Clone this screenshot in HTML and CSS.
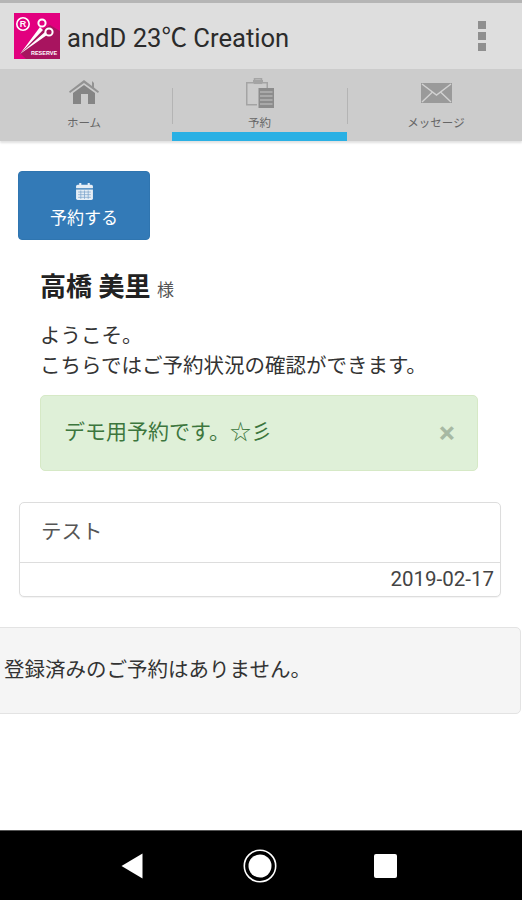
FILE: index.html
```html
<!DOCTYPE html>
<html lang="ja">
<head>
  <meta charset="UTF-8" />
  <meta name="viewport" content="width=device-width, initial-scale=1.0" />
  <title>andD 23℃ Creation</title>
  <link rel="stylesheet" href="styles.css">
</head>
<body>
  <div class="app-bar">
    <svg class="logo" viewBox="0 0 46 46">
      <rect width="46" height="46" fill="#e2007f"/>
      <path d="M46 18 L46 46 L12 46 L6 40 L28 17 L36 12 Z" fill="#a8145f"/>
      <circle cx="9" cy="11" r="6.2" fill="none" stroke="#fff" stroke-width="1.6"/>
      <text class="logo-r" x="9" y="14" text-anchor="middle">R</text>
      <circle cx="28" cy="10" r="3.6" fill="none" stroke="#fff" stroke-width="2"/>
      <circle cx="35" cy="19" r="3.6" fill="none" stroke="#fff" stroke-width="2"/>
      <path d="M6 41 L26 14 L29 17 Z M6 41 L31 19 L33 22 Z" fill="#fff"/>
      <text class="logo-text" x="30" y="42" text-anchor="middle">RESERVE</text>
    </svg>
    <div class="app-title">andD 23℃ Creation</div>
    <div class="menu-dots"><span></span><span></span><span></span></div>
  </div>

  <div class="tabs">
    <div class="tab tab-home">
      <svg class="tab-icon icon-home" viewBox="0 0 30 25">
        <path d="M0 12.5 L15 1 L23 7 L23 2 L25 4 L25 8.5 L30 12.5 L29 14 L15 4 L1 14 Z" fill="#939393"/>
        <path d="M4 14 L15 6 L26 14 L26 25 L19 25 L19 15 L12 15 L12 25 L4 25 Z" fill="#858585"/>
      </svg>
      <div class="tab-label">ホーム</div>
    </div>
    <div class="tab tab-active">
      <svg class="tab-icon icon-clip" viewBox="0 0 28 30">
        <path d="M0 4 H7 V2 H17 V4 H22 V10 H20.5 V5.5 H1.5 V26 H11 V27.5 H0 Z" fill="#a4a4a4"/>
        <rect x="8.5" y="0.8" width="7" height="4.5" fill="none" stroke="#a4a4a4" stroke-width="1.5"/>
        <path d="M12.5 10 H28 V30 H12.5 Z" fill="#8c8c8c"/>
        <path d="M14 14 H26.5 M14 18 H26.5 M14 22 H26.5 M14 26 H26.5" stroke="#c6c6c6" stroke-width="1.2"/>
      </svg>
      <div class="tab-label">予約</div>
    </div>
    <div class="tab tab-msg">
      <svg class="tab-icon icon-mail" viewBox="0 0 31 20">
        <rect width="31" height="20" fill="#9a9a9a"/>
        <path d="M1 1 L15.5 12 L30 1 M1 19 L11.5 9 M30 19 L19.5 9" fill="none" stroke="#d2d2d2" stroke-width="1.4"/>
      </svg>
      <div class="tab-label">メッセージ</div>
    </div>
  </div>

  <main class="content">
    <button class="btn-reserve">
      <svg class="cal-icon" viewBox="0 0 18 18">
        <path d="M1 4 Q1 2.5 2.5 2.5 H4 V1 H6 V2.5 H12 V1 H14 V2.5 H15.5 Q17 2.5 17 4 V6 H1 Z" fill="#e6eef6"/>
        <path d="M1 7 H17 V15.5 Q17 17 15.5 17 H2.5 Q1 17 1 15.5 Z" fill="#e6eef6"/>
        <path d="M3 9.5 H15 M3 12 H15 M3 14.5 H15 M5.5 8 V16 M9 8 V16 M12.5 8 V16" stroke="#7ba3cb" stroke-width=".7"/>
      </svg>
      <span>予約する</span>
    </button>

    <div class="welcome">
      <div class="user-name">高橋 美里 <small>様</small></div>
      <p class="greeting">ようこそ。<br>こちらではご予約状況の確認ができます。</p>
      <div class="alert">
        <span>デモ用予約です。☆彡</span>
        <span class="alert-close">×</span>
      </div>
    </div>

    <div class="panel">
      <div class="panel-body">テスト</div>
      <div class="panel-footer">2019-02-17</div>
    </div>

    <div class="well">登録済みのご予約はありません。</div>
  </main>

  <div class="nav-bar">
    <svg class="nav-back" viewBox="0 0 22 26"><path d="M0.5 13 L21.5 0.5 V25.5 Z" fill="#fff"/></svg>
    <svg class="nav-home" viewBox="0 0 34 34">
      <circle cx="17" cy="17" r="15.7" fill="none" stroke="#fff" stroke-width="1.6"/>
      <circle cx="17" cy="17" r="11.5" fill="#fff"/>
    </svg>
    <div class="nav-recent"></div>
  </div>
</body>
</html>
```

FILE: styles.css
```css
* {
  box-sizing: border-box;
}

body {
  margin: 0;
  height: 900px;
  display: flex;
  flex-direction: column;
  overflow: hidden;
  background: #fff;
  color: #333;
  font-family: 'Roboto', 'Noto Sans CJK JP', sans-serif;
}

.app-bar {
  height: 69px;
  flex-shrink: 0;
  border-top: 3px solid #b5b5b5;
  background: #dedede;
  display: flex;
  align-items: center;
  padding: 0 36px 0 14px;
}

.logo {
  width: 46px;
  height: 46px;
  flex-shrink: 0;
}

.logo-r {
  font: bold 9px 'Liberation Sans', sans-serif;
  fill: #fff;
}

.logo-text {
  font: bold 5.5px 'Liberation Sans', sans-serif;
  fill: #fff;
}

.app-title {
  flex: 1;
  margin-left: 7px;
  padding-bottom: 2px;
  font-size: 25.6px;
  color: #2b2b2b;
  white-space: nowrap;
}

.menu-dots {
  display: flex;
  flex-direction: column;
  gap: 3px;
}

.menu-dots span {
  width: 8px;
  height: 8px;
  background: #8f8f8f;
}

.tabs {
  height: 72px;
  flex-shrink: 0;
  display: grid;
  grid-template-columns: 172px 175px 1fr;
  background: #ccc;
  box-shadow: 0 2px 2px rgba(0, 0, 0, 0.12);
}

.tab {
  position: relative;
  display: flex;
  flex-direction: column;
  align-items: center;
  height: 72px;
}

.tab-home {
  padding-right: 4px;
}

.tab-msg {
  padding-left: 3px;
}

.tab + .tab::before {
  content: "";
  position: absolute;
  left: 0;
  top: 19px;
  height: 36px;
  width: 1px;
  background: #b4b4b4;
}

.tab-icon {
  display: block;
}

.icon-home {
  width: 30px;
  height: 25px;
  margin-top: 10px;
}

.icon-clip {
  width: 28px;
  height: 30px;
  margin-top: 9px;
}

.icon-mail {
  width: 31px;
  height: 20px;
  margin-top: 14px;
}

.tab-label {
  position: absolute;
  top: 47px;
  font-size: 11.5px;
  line-height: 14px;
  color: #666;
}

.tab-active {
  border-bottom: 9px solid #29b0e4;
}

.content {
  flex: 1;
  padding: 30px 21px 0 18px;
}

.btn-reserve {
  display: flex;
  flex-direction: column;
  align-items: center;
  width: 132px;
  height: 69px;
  padding: 10px 0 0;
  background: #337ab7;
  border: 1px solid #2f75b0;
  border-radius: 4px;
  color: #fff;
  font-family: inherit;
  font-size: 17px;
  line-height: 24px;
}

.cal-icon {
  width: 19px;
  height: 19px;
  margin-bottom: 5px;
}

.welcome {
  padding-left: 22px;
}

.user-name {
  margin-top: 29px;
  font-size: 26px;
  line-height: 36px;
  font-weight: 700;
  color: #222;
}

.user-name small {
  font-size: 17px;
  font-weight: 400;
  color: #555;
}

.greeting {
  margin: 13px 0 0;
  font-size: 20.5px;
  line-height: 30px;
  color: #333;
}

.alert {
  margin-top: 14px;
  width: 438px;
  height: 76px;
  padding: 0 22px 6px 23px;
  display: flex;
  align-items: center;
  justify-content: space-between;
  background: #dff0d8;
  border: 1px solid #d6e9c6;
  border-radius: 5px;
  color: #3c763d;
  font-size: 21px;
}

.alert-close {
  margin-top: 4px;
  font-size: 30px;
  font-weight: 700;
  color: #a7b9a3;
}

.panel {
  margin: 31px 0 0 1px;
  width: 482px;
  border: 1px solid #ddd;
  border-radius: 5px;
  background: #fff;
  box-shadow: 0 1px 1px rgba(0, 0, 0, 0.05);
}

.panel-body {
  height: 60px;
  padding: 0 21px 5px;
  display: flex;
  align-items: center;
  font-size: 20.5px;
  color: #555;
  border-bottom: 1px solid #ddd;
}

.panel-footer {
  height: 33px;
  padding: 0 6px;
  text-align: right;
  font-size: 20.5px;
  line-height: 33px;
  color: #444;
}

.well {
  margin: 30px -20px 0 -26px;
  height: 87px;
  padding: 0 11px 5px;
  display: flex;
  align-items: center;
  background: #f5f5f5;
  border: 1px solid #e3e3e3;
  border-radius: 5px;
  font-size: 20.5px;
  color: #333;
}

.nav-bar {
  height: 70px;
  flex-shrink: 0;
  background: #000;
  border-top: 1px solid #555;
  display: flex;
  align-items: center;
  justify-content: center;
  gap: 97px;
  padding-right: 5px;
}

.nav-back {
  width: 22px;
  height: 26px;
}

.nav-home {
  width: 34px;
  height: 34px;
  margin-left: 3px;
}

.nav-recent {
  width: 23px;
  height: 24px;
  background: #fff;
  border-radius: 2px;
}
```
